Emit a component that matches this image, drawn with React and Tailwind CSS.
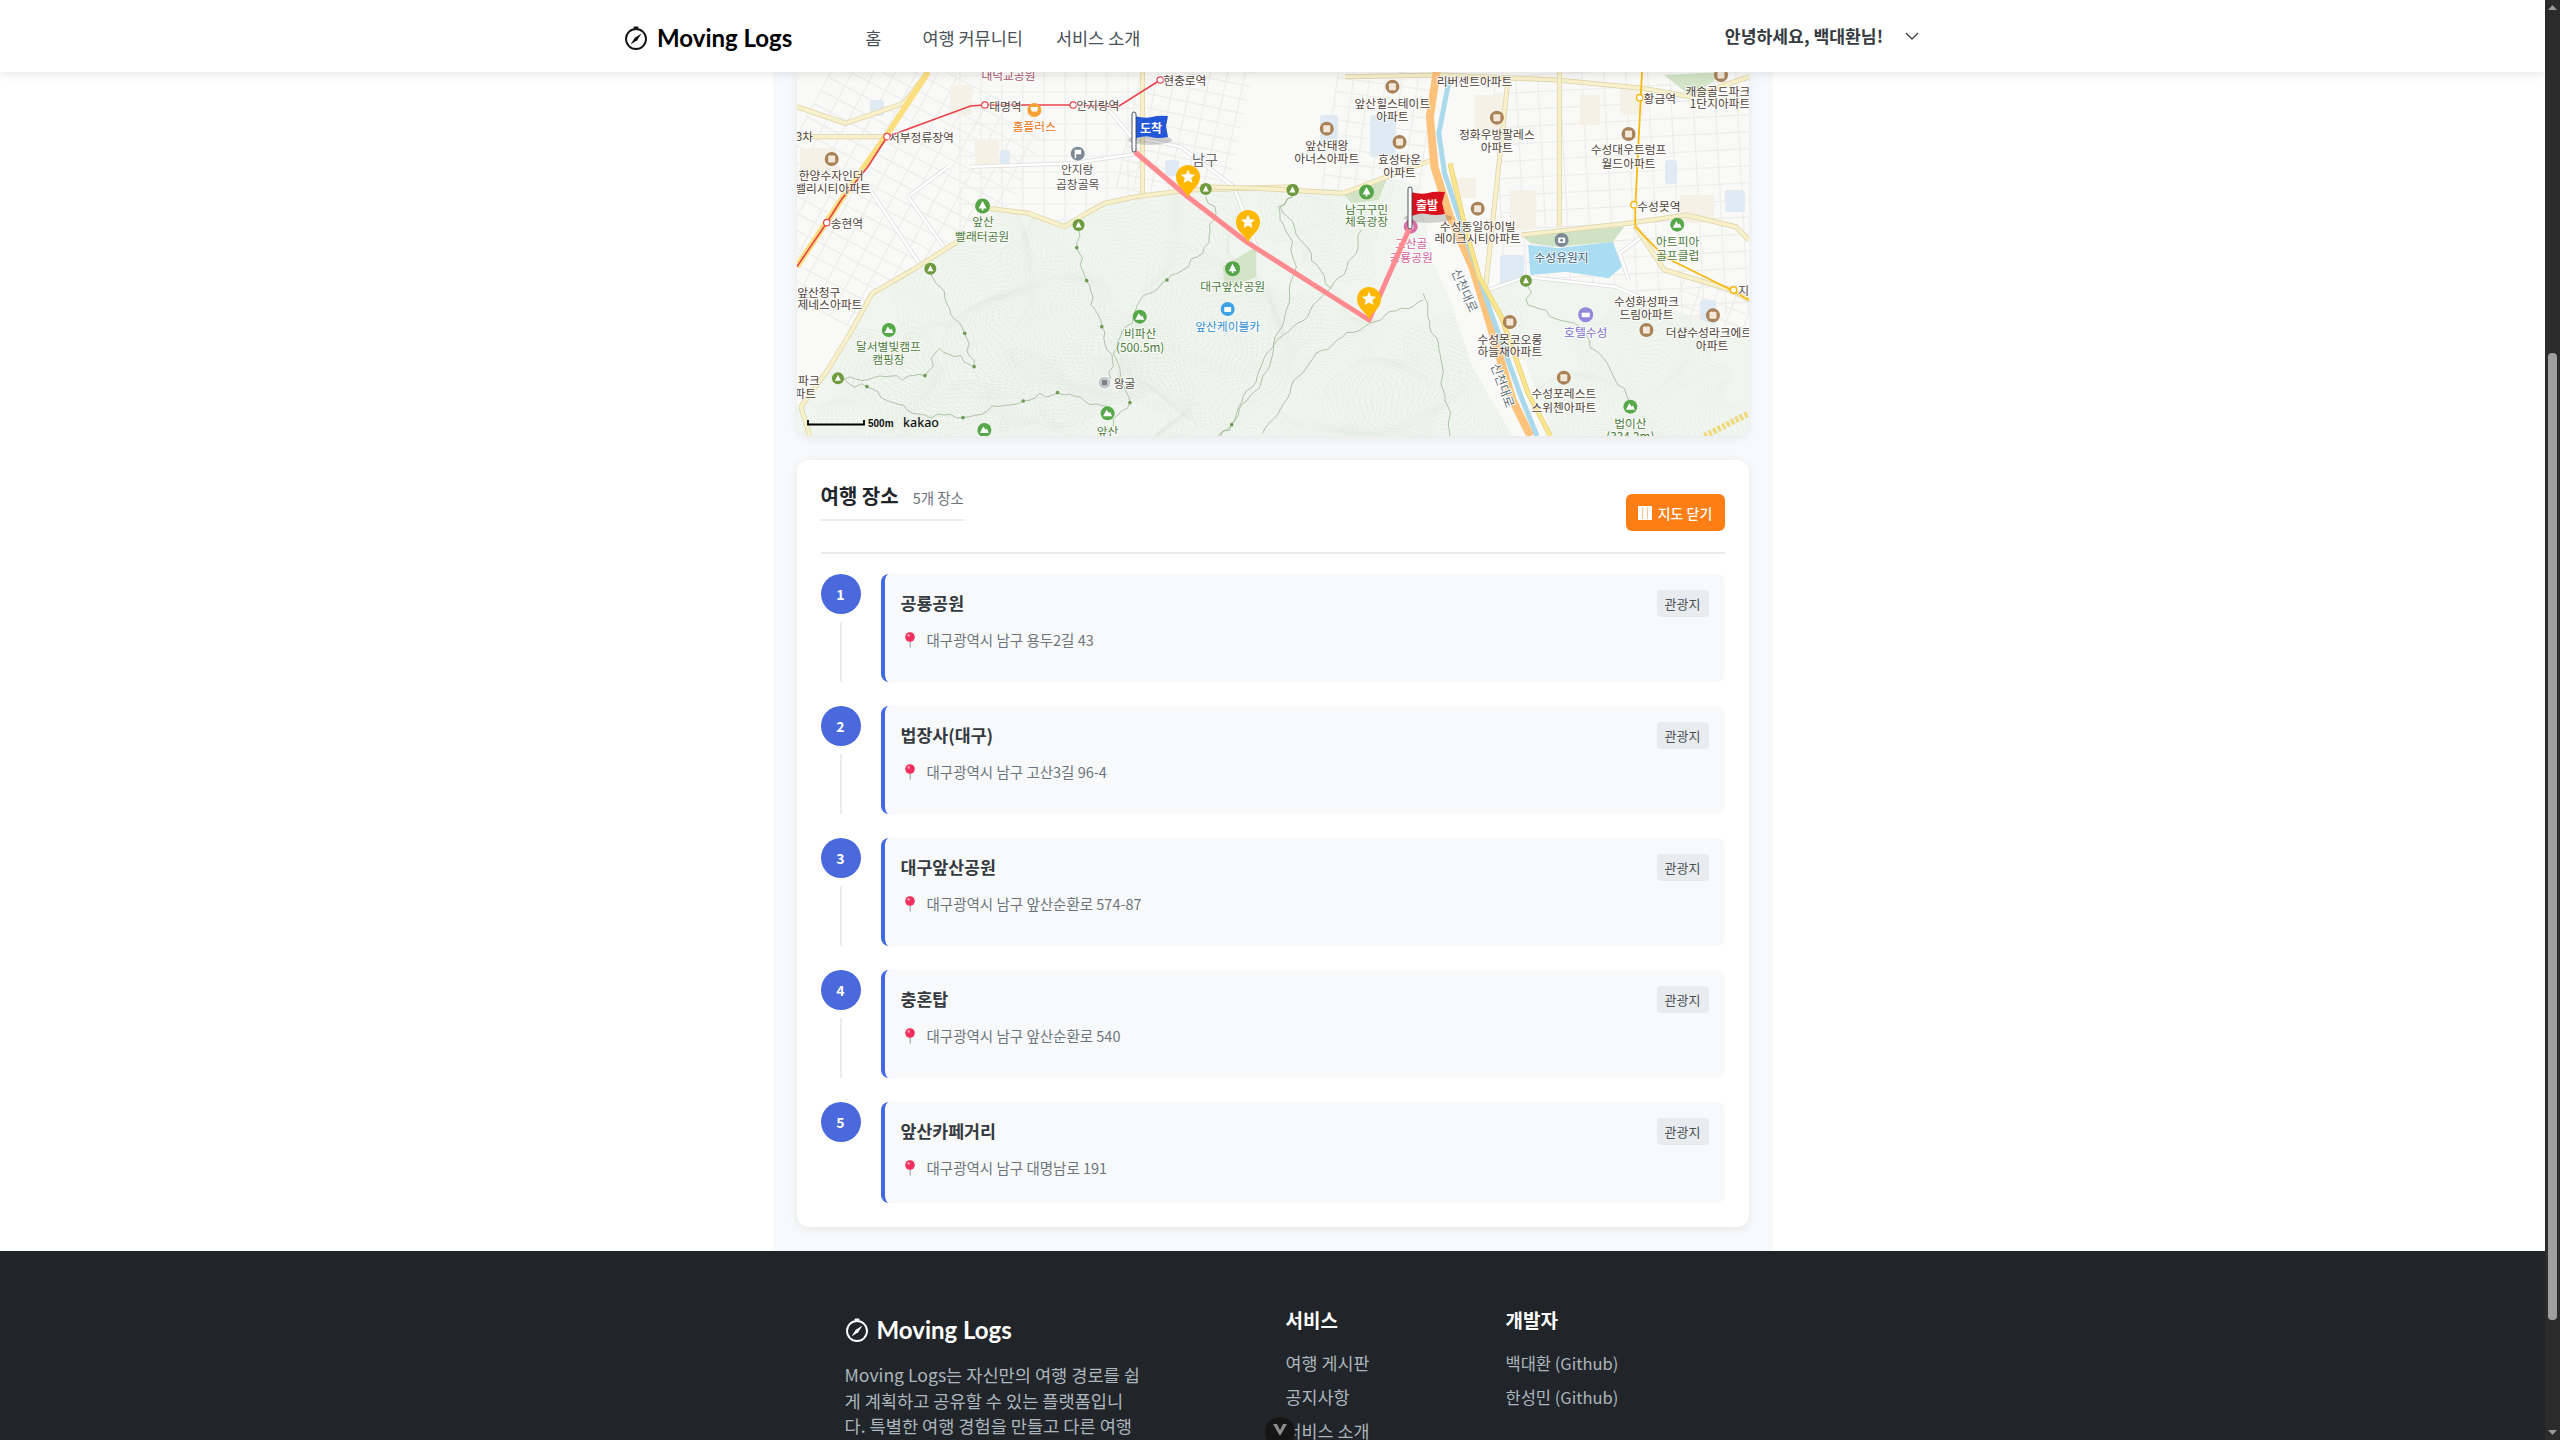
import React from "react";

const KR = { fontFamily: '"Noto Sans CJK KR", "Noto Sans", sans-serif' };
const z1 = (X, Y) => [600 + X / 2.24, Y / 3];
const z2 = (X, Y) => [1200 + X / 2.24, Y / 3];
const pts = (f, arr) => arr.map(([a, b]) => f(a, b).map((n) => n.toFixed(1)).join(",")).join(" ");

function wobble(str, seed) {
  const p = str.split(" ").map((s) => s.split(",").map(Number));
  const out = [];
  for (let i = 0; i < p.length - 1; i++) {
    const [ax, ay] = p[i], [bx, by] = p[i + 1];
    const len = Math.hypot(bx - ax, by - ay) || 1;
    const nx = -(by - ay) / len, ny = (bx - ax) / len;
    const steps = Math.max(2, Math.round(len / 6));
    for (let s = 0; s < steps; s++) {
      const t = s / steps;
      const amp = 2.6 * Math.sin(Math.PI * t);
      const o = amp * (Math.sin(t * 9 + seed + i) + 0.5 * Math.sin(t * 23 + seed * 2));
      out.push(`${(ax + (bx - ax) * t + nx * o).toFixed(1)},${(ay + (by - ay) * t + ny * o).toFixed(1)}`);
    }
  }
  out.push(p[p.length - 1].join(","));
  return out.join(" ");
}

const DARK = "#4f4238";
const GRN = "#4c7a3a";
const labels1 = [
  ["대덕교공원", 915, 222, "#a8586c"], ["현충로역", 1310, 238, DARK], ["대명역", 908, 316, DARK], ["안지랑역", 1115, 314, DARK],
  ["홈플러스", 973, 375, "#e8720c"], ["서부정류장역", 720, 408, DARK], ["3차", 458, 405, DARK], ["한양수자인더", 518, 524, DARK],
  ["밸리시티아파트", 522, 563, DARK], ["안지랑", 1069, 506, "#55504a"], ["곱창골목", 1070, 549, "#55504a"], ["송현역", 553, 667, DARK],
  ["앞산", 858, 660, GRN], ["빨래터공원", 856, 706, GRN], ["앞산청구", 490, 873, DARK], ["제네스아파트", 515, 910, DARK],
  ["달서별빛캠프", 646, 1037, GRN], ["캠핑장", 646, 1076, GRN], ["비파산", 1210, 998, GRN], ["(500.5m)", 1210, 1040, GRN],
  ["왕굴", 1175, 1146, "#55504a"], ["앞산", 1137, 1290, GRN], ["대구앞산공원", 1417, 855, GRN], ["앞산케이블카", 1406, 975, "#2f8fd0"],
  ["파크", 468, 1138, DARK], ["파트", 460, 1178, DARK],
];
const labels2 = [
  ["리버센트아파트", 615, 240, DARK], ["앞산힐스테이트", 431, 308, DARK], ["아파트", 431, 347, DARK], ["앞산태왕", 284, 432, DARK],
  ["아너스아파트", 284, 473, DARK], ["효성타운", 447, 475, DARK], ["아파트", 447, 513, DARK], ["정화우방팔레스", 665, 400, DARK],
  ["아파트", 665, 438, DARK], ["수성대우트럼프", 960, 446, DARK], ["월드아파트", 960, 487, DARK], ["황금역", 1030, 292, DARK],
  ["캐슬골드파크", 1160, 270, DARK], ["1단지아파트", 1165, 308, DARK], ["수성못역", 1028, 617, DARK], ["남구구민", 373, 625, GRN],
  ["체육광장", 373, 662, GRN], ["고산골", 473, 728, "#d0609a"], ["공룡공원", 473, 768, "#d0609a"], ["수성동일하이빌", 622, 676, DARK],
  ["레이크시티아파트", 622, 712, DARK], ["수성유원지", 810, 770, "#3f5a6a"], ["아트피아", 1070, 722, GRN], ["골프클럽", 1070, 763, GRN],
  ["수성화성파크", 1000, 900, DARK], ["드림아파트", 1000, 940, DARK], ["호텔수성", 864, 994, "#7a6cc8"], ["더샵수성라크에르", 1140, 995, DARK],
  ["아파트", 1147, 1033, DARK], ["수성못코오롱", 694, 1014, DARK], ["하늘채아파트", 694, 1052, DARK], ["수성포레스트", 815, 1178, DARK],
  ["스위첸아파트", 815, 1220, DARK], ["법이산", 964, 1268, GRN], ["(334.2m)", 964, 1306, GRN], ["지", 1218, 868, DARK],
];

const brown = [z1(519, 477), ...[[431, 260], [284, 386], [447, 426], [665, 353], [960, 402], [1167, 225], [622, 626], [694, 966], [1000, 990], [1149, 946], [815, 1133]].map(([a, b]) => z2(a, b))];
const tree = [z1(857, 618), z1(1417, 806), z2(373, 576)];
const dark = [z1(1072, 675), z1(1357, 567), z1(1552, 570), z1(740, 806), z1(533, 1135), z2(207, 570), z2(730, 842)];
const mtn = [z1(647, 990), z1(1209, 950), z1(1137, 1240), z1(861, 1290), z2(964, 1220), z2(1069, 674)];
const trailDots = [[1068, 743], [1090, 842], [1124, 980], [817, 1000], [838, 1100], [728, 1127], [598, 1160], [948, 1203], [1025, 1178], [1187, 1208], [813, 1253], [1415, 1274], [1270, 840]].map(([a, b]) => z1(a, b));

function gridLines(x0, y0, x1, y1, angle, sx, sy) {
  const cx = (x0 + x1) / 2, cy = (y0 + y1) / 2;
  let d = "";
  for (let x = x0; x <= x1; x += sx) d += `M${x} ${y0}L${x} ${y1}`;
  for (let y = y0; y <= y1; y += sy) d += `M${x0} ${y}L${x1} ${y}`;
  return { d, t: `rotate(${angle} ${cx} ${cy})` };
}
const grids = [
  gridLines(780, 60, 1000, 330, 28, 19, 15),
  gridLines(960, 60, 1140, 260, 0, 21, 16),
  gridLines(1130, 60, 1240, 200, 12, 17, 14),
  gridLines(1500, 70, 1760, 320, -3, 22, 17),
  gridLines(1660, 290, 1760, 420, 20, 18, 14),
  gridLines(1330, 70, 1430, 200, 8, 16, 14),
];

function contours() {
  const peaks = [[1130, 300, 36, 4.4], [1000, 340, 30, 4.6], [1270, 400, 38, 4.2], [1090, 420, 20, 4.8], [1330, 220, 14, 4.4], [1450, 400, 20, 5], [1640, 400, 24, 4.4], [900, 420, 20, 4.8]];
  const out = [];
  peaks.forEach(([cx, cy, n, step], pi) => {
    for (let k = 1; k <= n; k++) {
      let d = "";
      for (let i = 0; i <= 72; i++) {
        const a = (i / 72) * Math.PI * 2;
        const r = k * step * (1 + 0.22 * Math.sin(3 * a + pi) + 0.1 * Math.sin(7 * a + k * 0.2 + pi) + 0.05 * Math.sin(13 * a + pi * 2));
        d += `${i ? "L" : "M"}${(cx + r * Math.cos(a)).toFixed(1)} ${(cy + r * 0.85 * Math.sin(a)).toFixed(1)}`;
      }
      out.push(d + "Z");
    }
  });
  return out.join("");
}
const contourD = contours();

const mountainL = [...[[441, 1230], [510, 1110], [560, 1000], [610, 880], [700, 810], [830, 700], [870, 625], [960, 640], [1040, 680], [1090, 640], [1130, 610], [1200, 590], [1320, 570], [1560, 560]].map(([a, b]) => z1(a, b)), ...[[130, 565], [320, 580], [420, 530], [490, 560], [520, 780], [560, 900], [610, 1100], [700, 1308]].map(([a, b]) => z2(a, b)), [797, 436]];
const mountainR = [[640, 880], [730, 830], [930, 860], [1040, 920], [1230, 1010], [1230, 1308], [790, 1308], [720, 1050]].map(([a, b]) => z2(a, b));

const cream = [
  pts(z1, [[441, 320], [550, 370], [680, 310], [735, 216]]), pts(z1, [[441, 410], [640, 410]]), pts(z1, [[1215, 216], [1215, 590]]),
  pts(z1, [[870, 625], [960, 640], [1040, 680], [1090, 640], [1130, 610], [1200, 590], [1320, 570], [1560, 560]]),
  pts(z2, [[0, 560], [130, 565], [320, 580], [420, 530], [520, 480]]),
  pts(z1, [[830, 700], [700, 810], [610, 880], [560, 1000], [510, 1110], [450, 1220], [470, 1308]]),
  pts(z2, [[325, 230], [540, 225], [800, 240], [990, 265], [1100, 290], [1230, 230]]),
  pts(z2, [[805, 216], [805, 680]]), pts(z2, [[690, 240], [640, 860]]), pts(z2, [[720, 705], [960, 670], [1090, 645], [1200, 680], [1230, 720]]),
  pts(z2, [[975, 680], [1040, 810], [1190, 870], [1230, 900]]),
];
const white = [
  pts(z1, [[1140, 330], [1190, 410], [1300, 440], [1420, 560], [1470, 740]]), pts(z1, [[830, 500], [1060, 490], [1210, 460]]),
  pts(z1, [[690, 590], [780, 500]]), pts(z1, [[690, 590], [770, 740]]), pts(z1, [[600, 560], [720, 800]]), pts(z2, [[1000, 700], [940, 760], [960, 840]]),
  pts(z2, [[645, 870], [730, 830], [930, 860], [1000, 900]]),
];
const trails = [
  pts(z1, [[1072, 690], [1068, 743], [1090, 842], [1124, 980], [1150, 1100], [1130, 1150]]), pts(z1, [[740, 820], [817, 1000], [838, 1100], [760, 1045], [728, 1127], [640, 1130], [533, 1140]]),
  pts(z1, [[533, 1140], [598, 1160], [700, 1240], [813, 1253], [948, 1203], [1025, 1178], [1137, 1220]]), pts(z1, [[1357, 590], [1380, 640], [1350, 760], [1270, 840], [1210, 900], [1150, 1060], [1187, 1208], [1130, 1300]]),
  pts(z1, [[1552, 590], [1520, 620], [1560, 800], [1500, 1100], [1415, 1274], [1390, 1308]]), pts(z2, [[207, 590], [180, 620], [232, 730], [270, 810], [293, 865], [350, 760], [362, 690]]),
  pts(z2, [[293, 865], [150, 1060], [71, 1274], [40, 1308]]), pts(z2, [[735, 860], [735, 915], [850, 980], [918, 1106], [960, 1200]]),
  pts(z2, [[500, 900], [380, 970], [260, 1060], [140, 1300]]), pts(z2, [[500, 880], [540, 1080], [560, 1308]]),
].map((s, i) => wobble(s, i + 1));

function Label({ x, y, t, c, size = 11.75 }) {
  return <text x={x} y={y} fill={c} fontSize={size} textAnchor="middle" dominantBaseline="central" stroke="#fff" strokeWidth="2" strokeOpacity=".75" paintOrder="stroke" style={KR}>{t}</text>;
}

function Pin({ x, y }) {
  const s = `M${x} ${y}C${x - 2} ${y - 8} ${x - 12} ${y - 11} ${x - 12} ${y - 21}A12 12 0 1 1 ${x + 12} ${y - 21}C${x + 12} ${y - 11} ${x + 2} ${y - 8} ${x} ${y}Z`;
  const cy = y - 21, cx = x;
  const star = Array.from({ length: 10 }, (_, i) => {
    const a = -Math.PI / 2 + (i * Math.PI) / 5, r = i % 2 ? 3.4 : 7.6;
    return `${(cx + r * Math.cos(a)).toFixed(1)},${(cy + r * Math.sin(a)).toFixed(1)}`;
  }).join(" ");
  return <g><path d={s} fill="#ffb800" /><polygon points={star} fill="#fff" /></g>;
}

function MapDrawing() {
  return (
    <svg viewBox="797 72 952 364" width="952" height="364" className="block">
      <defs>
        <clipPath id="mtnClip"><polygon points={mountainL.map((p) => p.join(",")).join(" ")} /><polygon points={mountainR.map((p) => p.join(",")).join(" ")} /></clipPath>
      </defs>
      <rect x="797" y="72" width="952" height="364" fill="#f9f9f8" />
      {grids.map((g, i) => <path key={i} d={g.d} transform={g.t} stroke="#ededec" strokeWidth="1.2" fill="none" />)}
      {[[800, 148, 36, 32], [950, 85, 22, 30], [975, 140, 24, 26], [1010, 300, 20, 26], [1475, 95, 30, 40], [1450, 178, 26, 20], [1620, 85, 24, 30], [1680, 195, 34, 28], [1660, 315, 50, 30], [1580, 95, 20, 30], [1510, 190, 26, 40], [1515, 310, 26, 50]].map(([x, y, w, h], i) => <rect key={i} x={x} y={y} width={w} height={h} fill="#f6f1e7" />)}
      {[[1040, 230, 18, 16], [870, 100, 14, 16], [1165, 160, 14, 16], [1370, 115, 26, 42], [1540, 245, 14, 18], [1665, 160, 12, 24], [1725, 190, 20, 22], [1320, 115, 18, 30], [1000, 150, 10, 16], [1700, 300, 16, 26], [1500, 255, 24, 44], [1560, 318, 26, 44], [1660, 335, 16, 26]].map(([x, y, w, h], i) => <rect key={i} x={x} y={y} width={w} height={h} rx="3" fill="#dfeaf2" />)}
      <polygon points={mountainL.map((p) => p.join(",")).join(" ")} fill="#f1f5ef" />
      <polygon points={mountainR.map((p) => p.join(",")).join(" ")} fill="#f1f5ef" />
      <path d={contourD} clipPath="url(#mtnClip)" fill="none" stroke="#c4d4c4" strokeOpacity=".3" strokeWidth=".5" />
      <polygon points={pts(z2, [[735, 735], [800, 745], [925, 725], [945, 800], [915, 835], [820, 815], [740, 825]])} fill="#aadcf2" />
      <polygon points={pts(z2, [[720, 705], [950, 680], [925, 725], [800, 740], [740, 730]])} fill="#cfe3c4" />
      <polygon points={pts(z1, [[1395, 800], [1470, 740], [1470, 830], [1400, 870]])} fill="#d2e3c6" />
      <polygon points={pts(z2, [[320, 580], [420, 530], [400, 600], [340, 610]])} fill="#d2e3c6" />
      <polygon points={pts(z2, [[1040, 225], [1180, 216], [1100, 290]])} fill="#d2e3c6" />
      {white.map((p, i) => <g key={i}><polyline points={p} fill="none" stroke="#dcdcdc" strokeWidth="4" /><polyline points={p} fill="none" stroke="#fff" strokeWidth="2.6" /></g>)}
      {trails.map((p, i) => <polyline key={i} points={p} fill="none" stroke="#9db896" strokeWidth=".8" />)}
      {cream.map((p, i) => <g key={i}><polyline points={p} fill="none" stroke="#dcd3a6" strokeWidth="5" strokeLinejoin="round" /><polyline points={p} fill="none" stroke="#f7f0cb" strokeWidth="3.6" strokeLinejoin="round" /></g>)}
      <polyline points={pts(z2, [[530, 216], [515, 350], [525, 500], [560, 650], [610, 800], [640, 930], [700, 1200], [740, 1308]])} fill="none" stroke="#fdc27c" strokeWidth="8" />
      <polyline points={pts(z2, [[558, 240], [535, 400], [548, 520], [580, 650], [625, 830], [655, 950], [722, 1200], [755, 1308]])} fill="none" stroke="#a9d9ea" strokeWidth="5" />
      <polyline points={pts(z2, [[560, 490], [590, 660], [625, 830], [675, 950], [735, 1180], [785, 1308]])} fill="none" stroke="#e5cf72" strokeWidth="5" />
      <polyline points={pts(z2, [[560, 490], [590, 660], [625, 830], [675, 950], [735, 1180], [785, 1308]])} fill="none" stroke="#fbe68f" strokeWidth="3.6" />
      <polyline points={pts(z1, [[735, 216], [645, 400], [545, 590], [441, 800]])} fill="none" stroke="#fbdf7e" strokeWidth="6" />
      <polyline points={pts(z1, [[1255, 240], [1160, 320], [1060, 315], [860, 315], [830, 318], [643, 410], [600, 500], [540, 600], [508, 668], [441, 800]])} fill="none" stroke="#e8424a" strokeWidth="1.6" />
      <polyline points={pts(z2, [[990, 216], [975, 620], [975, 680], [1040, 770], [1190, 870], [1230, 900]])} fill="none" stroke="#f8b90c" strokeWidth="1.8" />
      <polyline points={pts(z2, [[1130, 1308], [1230, 1240]])} fill="none" stroke="#f0d873" strokeWidth="6" strokeDasharray="3 2" />
      {[z1(1255, 240), z1(1060, 315), z1(862, 315), z1(643, 410), z1(508, 668)].map(([x, y], i) => <circle key={i} cx={x} cy={y} r="3.2" fill="#fff" stroke="#e8424a" strokeWidth="1.2" />)}
      {[z2(985, 293), z2(972, 614), z2(1195, 870)].map(([x, y], i) => <circle key={i} cx={x} cy={y} r="3.2" fill="#fff" stroke="#f8b90c" strokeWidth="1.4" />)}
      {trailDots.map(([x, y], i) => <circle key={i} cx={x} cy={y} r="1.8" fill="#6f9a55" />)}
      {[...brown].map(([x, y], i) => <g key={i}><circle cx={x} cy={y} r="7" fill="#a98258" /><rect x={x - 3.5} y={y - 3.5} width="7" height="7" rx="1" fill="#f2e7d8" /></g>)}
      {tree.map(([x, y], i) => <g key={i}><circle cx={x} cy={y} r="7.5" fill="#55a548" /><polygon points={`${x},${y - 5} ${x + 4},${y + 2.5} ${x - 4},${y + 2.5}`} fill="#fff" /><rect x={x - .8} y={y + 2} width="1.6" height="2.5" fill="#fff" /></g>)}
      {dark.map(([x, y], i) => <g key={i}><circle cx={x} cy={y} r="6" fill="#6f9a3e" /><polygon points={`${x},${y - 3.5} ${x + 3},${y + 2.5} ${x - 3},${y + 2.5}`} fill="#fff" /></g>)}
      {mtn.map(([x, y], i) => <g key={i}><circle cx={x} cy={y} r="7" fill="#57a84a" /><polygon points={`${x - 4.5},${y + 3} ${x - 1},${y - 3.5} ${x + 1.5},${y} ${x + 2.5},${y - 1.5} ${x + 4.5},${y + 3}`} fill="#fff" /></g>)}
      {(() => { const [x, y] = z1(973, 330); return <g><circle cx={x} cy={y} r="7" fill="#f4a235" /><path d={`M${x - 4} ${y - 3}h8l-1.4 4.5h-5.2z`} fill="#fff" /></g>; })()}
      {(() => { const [x, y] = z1(1070, 461); return <g><circle cx={x} cy={y} r="7" fill="#7d8a95" /><path d={`M${x - 3} ${y - 4}h6.5v4.5h-5v4h-1.5z`} fill="#fff" /></g>; })()}
      {(() => { const [x, y] = z1(1406, 927); return <g><circle cx={x} cy={y} r="7" fill="#3fa2e4" /><rect x={x - 3.5} y={y - 2} width="7" height="5" rx="1" fill="#fff" /></g>; })()}
      {(() => { const [x, y] = z1(1130, 1148); return <g><circle cx={x} cy={y} r="6.5" fill="#c7c9ce" stroke="#fff" /><rect x={x - 2.5} y={y - 2.5} width="5" height="5" fill="#7c7f86" /></g>; })()}
      {(() => { const [x, y] = z2(810, 720); return <g><circle cx={x} cy={y} r="7" fill="#7d8a95" /><rect x={x - 3.5} y={y - 2.5} width="7" height="5.5" rx="1" fill="#fff" /><circle cx={x} cy={y + .3} r="1.5" fill="#7d8a95" /></g>; })()}
      {(() => { const [x, y] = z2(864, 944); return <g><circle cx={x} cy={y} r="7.5" fill="#9488dc" /><rect x={x - 4} y={y - 2} width="8" height="4.5" fill="#fff" /></g>; })()}
      {(() => { const [x, y] = z2(472, 680); return <g><circle cx={x} cy={y} r="7" fill="#d671a8" /><circle cx={x} cy={y} r="3" fill="#f3d2e3" /></g>; })()}
      {labels1.map(([t, X, Y, c], i) => { const [x, y] = z1(X, Y); return <Label key={i} x={x} y={y} t={t} c={c} />; })}
      {labels2.map(([t, X, Y, c], i) => { const [x, y] = z2(X, Y); return <Label key={i} x={x} y={y} t={t} c={c} />; })}
      <Label x={1205} y={159} t="남구" c="#6b6b6b" size={14} />
      {(() => { const [x, y] = z2(595, 870); return <text transform={`rotate(66 ${x} ${y})`} x={x} y={y} fontSize="12.5" fill="#5f6f78" textAnchor="middle" dominantBaseline="central" stroke="#fff" strokeWidth="2" paintOrder="stroke" style={KR}>신천대로</text>; })()}
      {(() => { const [x, y] = z2(680, 1155); return <text transform={`rotate(70 ${x} ${y})`} x={x} y={y} fontSize="12.5" fill="#5f6f78" textAnchor="middle" dominantBaseline="central" stroke="#fff" strokeWidth="2" paintOrder="stroke" style={KR}>신천대로</text>; })()}
      <polyline points="1410,227 1369,320 1248,243 1188,197 1135,152" fill="none" stroke="#ff8a90" strokeWidth="5" strokeLinejoin="round" />
      <Pin x={1188} y={198} />
      <Pin x={1248} y={243} />
      <Pin x={1369} y={320} />
      <ellipse cx="1150" cy="140" rx="22" ry="5" fill="#000" opacity=".16" />
      <path d="M1134 116q12 3 18 1t16-1l-2 10 2 11q-10 2-17 0t-17 2z" fill="#2456d8" />
      <rect x="1132" y="112" width="4" height="40" rx="2" fill="#fff" stroke="#3a4250" strokeWidth=".9" />
      <text x="1151" y="127" fontSize="12" fontWeight="700" fill="#fff" textAnchor="middle" dominantBaseline="central" style={KR}>도착</text>
      <ellipse cx="1428" cy="218" rx="24" ry="5" fill="#000" opacity=".16" />
      <path d="M1410 192q12 3 18 1t17-1l-3 11 3 11q-10 2-18 0t-17 3z" fill="#d8111c" />
      <rect x="1408" y="187" width="4" height="42" rx="2" fill="#fff" stroke="#3a4250" strokeWidth=".9" />
      <text x="1427" y="204" fontSize="12" fontWeight="700" fill="#fff" textAnchor="middle" dominantBaseline="central" style={KR}>출발</text>
      <path d="M808 420v4.5h56v-4.5" fill="none" stroke="#000" strokeWidth="1.8" />
      <text x="868" y="427" fontSize="10" fontWeight="700" fill="#111" style={{ fontFamily: '"Liberation Sans", sans-serif' }}>500m</text>
      <text x="903" y="427" fontSize="12.5" fontWeight="500" fill="#111" style={{ fontFamily: '"Noto Sans", sans-serif' }}>kakao</text>
    </svg>
  );
}

function Compass({ color }) {
  return (
    <svg width="24" height="24" viewBox="0 0 24 24" fill="none" className="shrink-0">
      <circle cx="12" cy="13" r="10" stroke={color} strokeWidth="1.9" />
      <rect x="9.5" y="0.5" width="5" height="2" rx="1" fill={color} />
      <path d="M17.5 7.5L13.2 14.2L6.5 18.5L10.8 11.8Z" fill={color} />
    </svg>
  );
}

function MapPin() {
  return (
    <svg width="22" height="16" viewBox="0 0 22 16" className="shrink-0">
      <rect x="8.6" y="8" width="1.2" height="7.5" fill="#a0a4aa" />
      <circle cx="9" cy="5" r="4.8" fill="#f22f5f" />
      <circle cx="7.6" cy="3.4" r="1.3" fill="#ff9cb4" />
    </svg>
  );
}

const places = [
  ["공룡공원", "대구광역시 남구 용두2길 43"],
  ["법장사(대구)", "대구광역시 남구 고산3길 96-4"],
  ["대구앞산공원", "대구광역시 남구 앞산순환로 574-87"],
  ["충혼탑", "대구광역시 남구 앞산순환로 540"],
  ["앞산카페거리", "대구광역시 남구 대명남로 191"],
];

function Place({ i, name, addr, last }) {
  return (
    <div className="flex gap-5">
      <div className="flex w-10 flex-col items-center">
        <div className="flex h-10 w-10 items-center justify-center rounded-full bg-[#4a69dd] text-sm font-bold text-white">{i}</div>
        {!last && <div className="mt-2 h-[60px] w-0.5 bg-[#e9ecef]" />}
      </div>
      <div className={`flex-1 rounded-lg border-l-4 border-[#4169e1] bg-[#f8f9fa] p-4 ${last ? "h-[101px]" : "h-[108px]"}`}>
        <div className="flex items-start justify-between">
          <h3 className="-mt-[1px] text-[17.3px] font-semibold leading-[27px] text-[#343a40]">{name}</h3>
          <span className="flex h-[27px] w-[52px] items-center justify-center rounded bg-[#e9ecef] text-[13px] text-[#495057]">관광지</span>
        </div>
        <div className="mt-[11px] flex items-center gap-1 text-[14.5px] leading-6 text-[#6c757d]"><MapPin /><span>{addr}</span></div>
      </div>
    </div>
  );
}

export default function App() {
  return (
    <div className="flex h-screen overflow-hidden bg-white" style={KR}>
      <div className="relative flex min-w-0 flex-1 flex-col">
        <header className="z-10 h-[72px] shrink-0 bg-white shadow-[0_2px_10px_rgba(0,0,0,0.1)]">
          <div className="mx-auto flex h-full w-[1297px] items-center pr-[2px]">
            <div className="mt-1 flex items-center gap-[9px]">
              <Compass color="#111" />
              <span className="text-2xl font-bold text-black" style={{ fontFamily: 'Lato, sans-serif' }}>Moving Logs</span>
            </div>
            <nav className="ml-[73px] mt-1 flex gap-[33px] text-[17.5px] text-[#495057]">
              <span className="mr-[8px]">홈</span><span>여행 커뮤니티</span><span>서비스 소개</span>
            </nav>
            <div className="ml-auto flex items-center gap-[22px] text-[17.2px] font-semibold text-[#343a40]">
              <span>안녕하세요, 백대환님!</span>
              <svg width="14" height="8" viewBox="0 0 14 8" fill="none"><path d="M1 1l6 6 6-6" stroke="#444" strokeWidth="1.4" /></svg>
            </div>
          </div>
        </header>
        <main className="flex-1 overflow-hidden">
          <div className="mx-auto w-[1000px] bg-[#f8f9fa] px-6 pb-6">
            <div className="overflow-hidden rounded-b-xl shadow-[0_2px_10px_rgba(0,0,0,0.08)]"><MapDrawing /></div>
            <section className="mt-6 rounded-xl bg-white px-6 pb-6 pt-6 shadow-[0_2px_10px_rgba(0,0,0,0.08)]">
              <div className="flex items-start justify-between border-b-2 border-[#e9ecef] pb-[21px]">
                <div className="h-[37px] w-[144px] border-b-2 border-[#e9ecef]">
                  <div className="-mt-[2px] flex items-baseline gap-[14px]">
                    <h2 className="text-xl font-bold leading-7 text-[#212529]">여행 장소</h2>
                    <span className="text-[14.5px] text-[#6c757d]">5개 장소</span>
                  </div>
                </div>
                <button className="mt-[10px] flex h-[37px] w-[99px] items-center justify-center gap-[6px] rounded-md bg-[#fd7e14] text-sm font-medium text-white">
                  <svg width="14" height="14" viewBox="0 0 14 14" className="shrink-0"><path d="M0 0h14v14H0z" fill="#fff" /><path d="M4.5 1v12M9.5 1v12" stroke="#f3c9a0" strokeWidth="1.2" /></svg>
                  지도 닫기
                </button>
              </div>
              <div className="mt-5 flex flex-col gap-6">
                {places.map(([n, a], i) => <Place key={n} i={i + 1} name={n} addr={a} last={i === places.length - 1} />)}
              </div>
            </section>
          </div>
          <footer className="bg-[#212529] pt-[60px]">
            <div className="mx-auto flex w-[1000px] pl-[72px]">
              <div className="w-[441px]">
                <div className="mt-[3px] flex items-center gap-2">
                  <Compass color="#fff" />
                  <span className="text-2xl font-bold text-white" style={{ fontFamily: 'Lato, sans-serif' }}>Moving Logs</span>
                </div>
                <p className="mt-[16px] w-[297px] text-[17.6px] leading-[25.6px] text-[#adb5bd]">Moving Logs는 자신만의 여행 경로를 쉽게 계획하고 공유할 수 있는 플랫폼입니다. 특별한 여행 경험을 만들고 다른 여행</p>
              </div>
              <div className="w-[220px]">
                <h4 className="-mt-[5px] text-[19px] font-bold text-white">서비스</h4>
                <div className="mt-[16px] flex flex-col gap-2.5 text-[17.4px] leading-6 text-[#adb5bd]"><span>여행 게시판</span><span>공지사항</span><span>서비스 소개</span></div>
              </div>
              <div className="w-[220px]">
                <h4 className="-mt-[5px] text-[19px] font-bold text-white">개발자</h4>
                <div className="mt-[16px] flex flex-col gap-2.5 text-[16.5px] leading-6 text-[#adb5bd]"><span>백대환 (Github)</span><span>한성민 (Github)</span></div>
              </div>
            </div>
          </footer>
        </main>
        <div className="absolute left-[1265px] top-[1417px] flex h-[30px] w-[30px] items-start justify-center rounded-full bg-[#151515] pt-[7px]">
          <svg width="14" height="12" viewBox="0 0 14 12"><path d="M0 0h4l3 6 3-6h4l-7 12z" fill="#8c8c8c" /></svg>
        </div>
      </div>
      <aside className="flex w-[15px] shrink-0 flex-col items-center bg-[#2c2c2c]">
        <svg width="9" height="5" viewBox="0 0 9 5" className="mt-[5px]"><path d="M4.5 0L9 5H0z" fill="#9a9a9a" /></svg>
        <div className="mt-[343px] h-[967px] w-[9px] rounded-[4px] bg-[#9f9f9f]" />
        <svg width="9" height="5" viewBox="0 0 9 5" className="mt-auto mb-[5px]"><path d="M4.5 5L9 0H0z" fill="#9a9a9a" /></svg>
      </aside>
    </div>
  );
}
